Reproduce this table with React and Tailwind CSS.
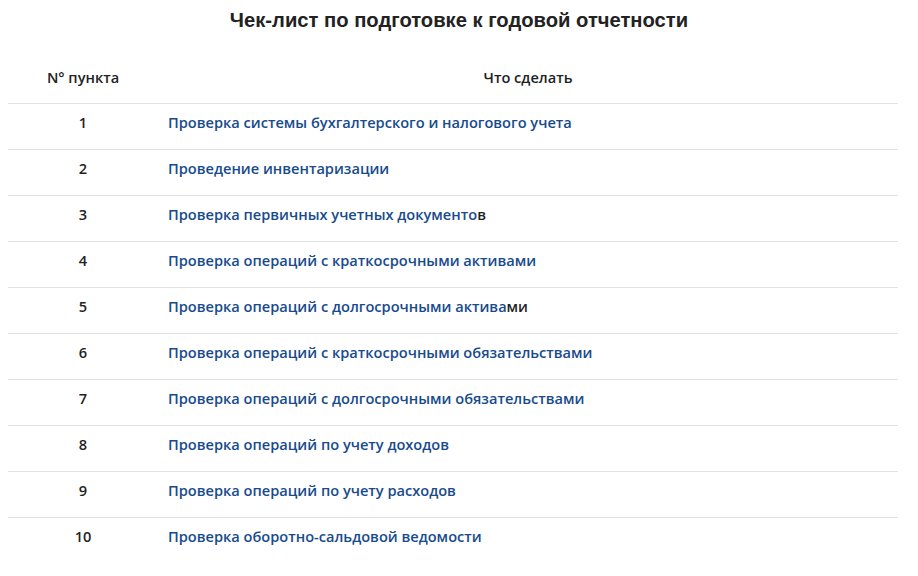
export default function App() {
  const rows = [
    ["Проверка системы бухгалтерского и налогового учета", ""],
    ["Проведение инвентаризации", ""],
    ["Проверка первичных учетных документо", "в"],
    ["Проверка операций с краткосрочными активами", ""],
    ["Проверка операций с долгосрочными актива", "ми"],
    ["Проверка операций с краткосрочными обязательствами", ""],
    ["Проверка операций с долгосрочными обязательствами", ""],
    ["Проверка операций по учету доходов", ""],
    ["Проверка операций по учету расходов", ""],
    ["Проверка оборотно-сальдовой ведомости", ""],
  ];
  return (
    <div className="w-[918px] h-[576px] bg-white text-[#222] overflow-hidden" style={{ fontFamily: '"Open Sans", "Liberation Sans", sans-serif' }}>
      <h1 className="text-center text-[20.2px] font-bold pt-[5px] h-[54px] text-[#222]" style={{ fontFamily: '"Liberation Sans", Arial, sans-serif' }}>
        Чек-лист по подготовке к годовой отчетности
      </h1>
      <div className="mx-[8px] w-[890px] text-[14.6px] font-semibold leading-[22px]">
        <div className="flex h-[50px] items-start pt-[12px] border-b border-[#e2e2e2]">
          <div className="w-[150px] text-center">N° пункта</div>
          <div className="flex-1 text-center">Что сделать</div>
        </div>
        {rows.map((r, i) => (
          <div key={i} className="flex h-[46px] items-start pt-[7px] border-b border-[#e2e2e2] last:border-b-0">
            <div className="w-[150px] text-center">{i + 1}</div>
            <div className="flex-1 pl-[10px]">
              <span className="text-[#184b8c]">{r[0]}</span>
              {r[1]}
            </div>
          </div>
        ))}
      </div>
    </div>
  );
}
